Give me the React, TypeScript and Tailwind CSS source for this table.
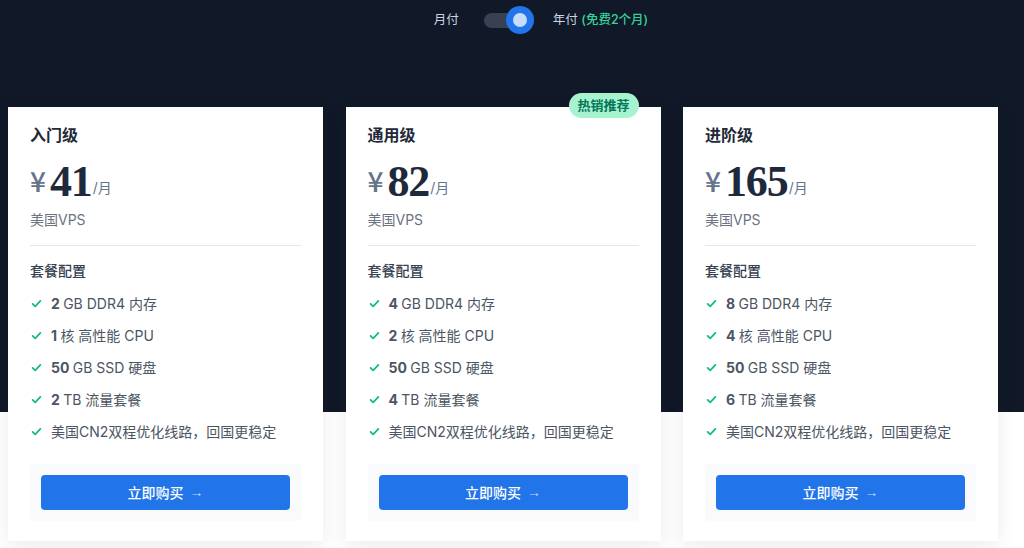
import React from 'react';

type Plan = {
  name: string;
  price: string;
  hot?: boolean;
  features: { num?: string; text: string }[];
};

const plans: Plan[] = [
  {
    name: '入门级',
    price: '41',
    features: [
      { num: '2', text: 'GB DDR4 内存' },
      { num: '1', text: '核 高性能 CPU' },
      { num: '50', text: 'GB SSD 硬盘' },
      { num: '2', text: 'TB 流量套餐' },
      { text: '美国CN2双程优化线路，回国更稳定' },
    ],
  },
  {
    name: '通用级',
    price: '82',
    hot: true,
    features: [
      { num: '4', text: 'GB DDR4 内存' },
      { num: '2', text: '核 高性能 CPU' },
      { num: '50', text: 'GB SSD 硬盘' },
      { num: '4', text: 'TB 流量套餐' },
      { text: '美国CN2双程优化线路，回国更稳定' },
    ],
  },
  {
    name: '进阶级',
    price: '165',
    features: [
      { num: '8', text: 'GB DDR4 内存' },
      { num: '4', text: '核 高性能 CPU' },
      { num: '50', text: 'GB SSD 硬盘' },
      { num: '6', text: 'TB 流量套餐' },
      { text: '美国CN2双程优化线路，回国更稳定' },
    ],
  },
];

const Check = () => (
  <svg viewBox="0 0 20 20" className="w-[13px] h-[13px] shrink-0 text-[#10b981]" fill="none" stroke="currentColor" strokeWidth={2.6} strokeLinecap="round" strokeLinejoin="round">
    <path d="M4 10.5l4 4 8-8.5" />
  </svg>
);

const PlanCard = ({ plan }: { plan: Plan }) => (
  <div className="relative bg-white shadow-[0_6px_20px_rgba(0,0,0,0.08)] px-[22px] pt-4 pb-[20px]">
    {plan.hot && (
      <div className="absolute right-[22px] top-[-14px] h-[25px] w-[70px] rounded-full bg-[#a7f3d0] text-[#047857] text-[13px] font-bold flex items-center justify-center">
        热销推荐
      </div>
    )}
    <h3 className="text-[16px] leading-6 font-semibold text-[#1f2937]">{plan.name}</h3>
    <div className="mt-[9px] h-12 flex items-end">
      <span className="text-[28px] leading-none text-[#64748b] font-medium mb-[10px] mr-[4px]" style={{ fontFamily: '"Noto Sans CJK SC", sans-serif' }}>¥</span>
      <span className="text-[44px] leading-none font-bold text-[#1e293b] tracking-tight" style={{ fontFamily: '"Liberation Serif", "DejaVu Serif", serif' }}>{plan.price}</span>
      <span className="text-[14px] text-[#64748b] mb-[6px] ml-[1px]">/月</span>
    </div>
    <p className="mt-[6px] text-[14px] leading-5 text-[#6b7280]">美国VPS</p>
    <div className="mt-[15px] border-t border-[#e5e7eb]" />
    <p className="mt-[15px] text-[14px] leading-5 font-medium text-[#374151]">套餐配置</p>
    <ul className="mt-3 flex flex-col gap-3">
      {plan.features.map((f, i) => (
        <li key={i} className="flex items-center gap-[8px] h-5 text-[14px] text-[#4b5563]">
          <Check />
          <span>
            {f.num && <span className="font-bold">{f.num} </span>}
            {f.text}
          </span>
        </li>
      ))}
    </ul>
    <div className="mt-[23px] bg-[#f8fafc] rounded p-[11px]">
      <button className="w-full h-[35px] rounded-sm bg-[#2175e8] text-white text-[14px] font-medium flex items-center justify-center">
        立即购买
        <span className="ml-[6px] text-[#bfdbfe] font-light" style={{ fontFamily: '"Liberation Sans", sans-serif' }}>→</span>
      </button>
    </div>
  </div>
);

export default function App() {
  return (
    <div
      className="w-[1024px] h-[548px] overflow-hidden bg-[linear-gradient(to_bottom,#111827_412px,#ffffff_412px)]"
      style={{ fontFamily: 'Inter, "Noto Sans CJK SC", sans-serif' }}
    >
      <div className="h-[40px] flex items-center justify-center text-[12.5px] text-[#cbd5e1] pl-[58px]">
        <span className="mr-[25px]">月付</span>
        <div className="relative w-[50px] h-[28px] flex items-center">
          <div className="w-[40px] h-[15px] rounded-full bg-[#374151]" />
          <div className="absolute right-0 top-0 w-[28px] h-[28px] rounded-full bg-[#2175e8] flex items-center justify-center">
            <div className="w-[14px] h-[14px] rounded-full bg-[#c7dbfd]" />
          </div>
        </div>
        <span className="ml-[19px]">年付 <span className="text-[#34d399] font-medium">(免费2个月)</span></span>
      </div>
      <div className="mt-[67px] ml-[8px] w-[990px] grid grid-cols-3 gap-[22.5px]">
        {plans.map((p) => (
          <PlanCard key={p.name} plan={p} />
        ))}
      </div>
    </div>
  );
}
